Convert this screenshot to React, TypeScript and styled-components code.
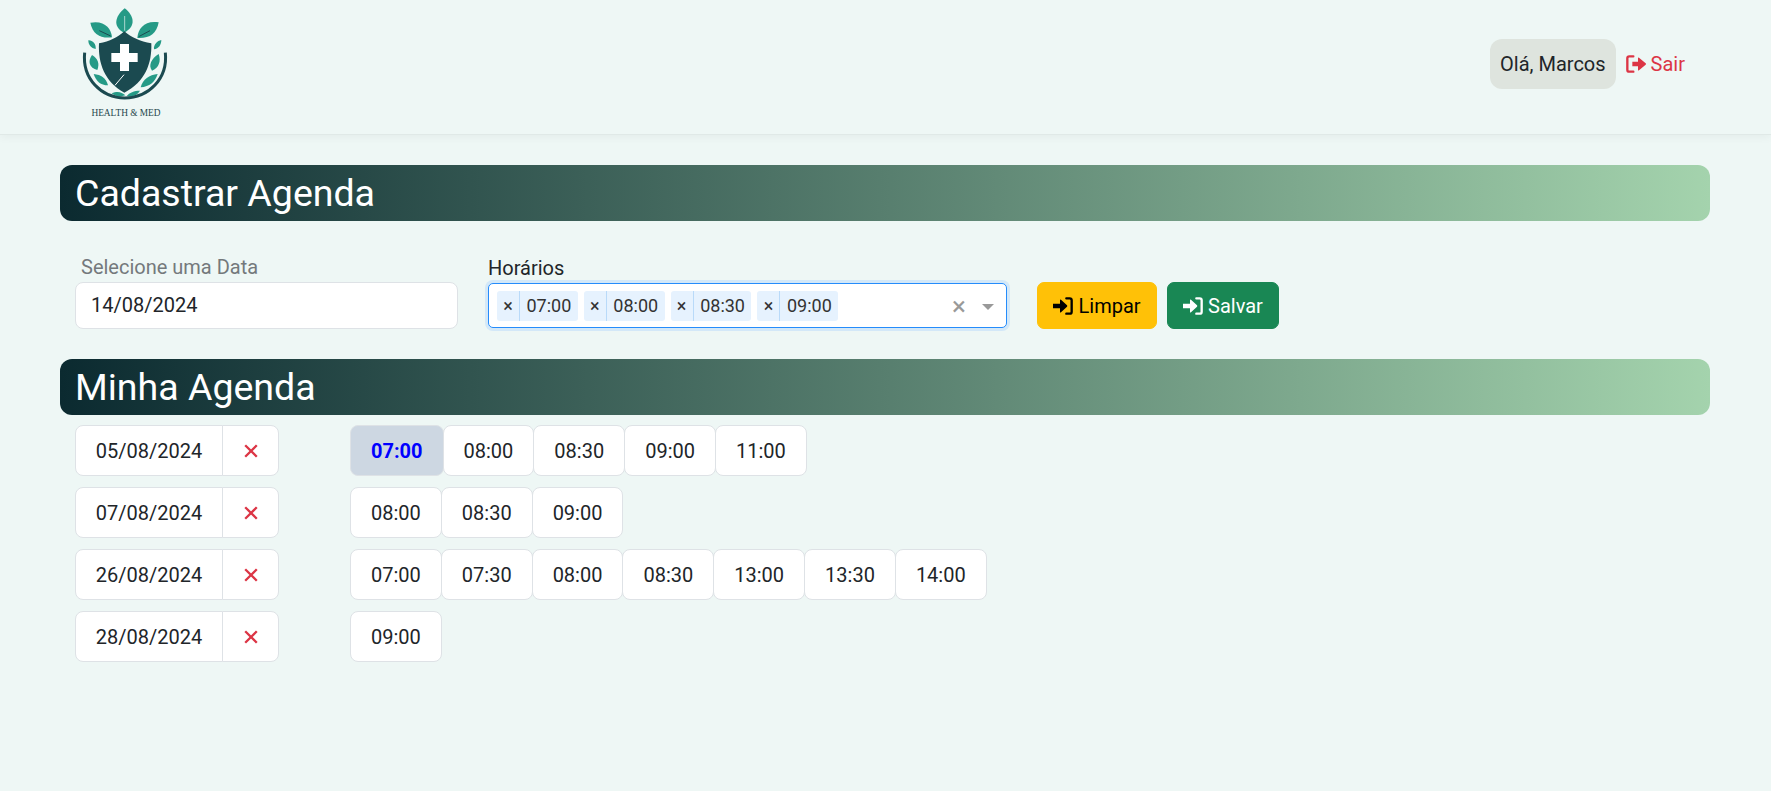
import React from "react";
import styled, { createGlobalStyle } from "styled-components";

const Global = createGlobalStyle`
  html, body { margin: 0; padding: 0; background: #eef7f5; }
  body {
    font-family: Roboto, "Liberation Sans", sans-serif;
    font-size: 20px;
    line-height: 30px;
    color: #212529;
    min-height: 791px;
    overflow: hidden;
  }
  * { box-sizing: border-box; }
`;

const Header = styled.header`
  height: 135px;
  padding: 0 86px 0 60px;
  display: flex;
  align-items: flex-start;
  justify-content: space-between;
  border-bottom: 1px solid #e0e9e7;
  box-shadow: 0 3px 8px rgba(0, 0, 0, 0.04);
`;

const Logo = styled.svg`
  width: 140px;
  height: 130px;
  display: block;
  flex: none;
`;

const UserArea = styled.div`
  display: flex;
  align-items: center;
  gap: 10px;
  margin-top: 39px;
`;

const Greeting = styled.span`
  display: block;
  height: 50px;
  padding: 10px;
  background: #dee4de;
  border-radius: 12px;
`;

const Logout = styled.a`
  display: flex;
  align-items: center;
  gap: 5px;
  color: #dc3545;
`;

const DoorIcon = styled.svg`
  width: 20px;
  height: 18px;
  flex: none;
  display: block;
`;

const Main = styled.main`
  padding: 30px 61px 0 60px;
`;

const Title = styled.h2`
  margin: 0;
  height: 56px;
  padding: 0 15px;
  font-size: 37.5px;
  line-height: 56px;
  font-weight: 400;
  color: #fff;
  border-radius: 12px;
  background: linear-gradient(90deg, #0b2a30 0%, #a4d3ad 100%);
`;

const FormRow = styled.div`
  display: flex;
  align-items: flex-end;
  padding: 0 15px 30px;
  height: 138px;
`;

const Field = styled.div<{ $width: number; $gap: number }>`
  width: ${(p) => p.$width}px;
  margin-right: ${(p) => p.$gap}px;
  flex: none;
`;

const FieldLabel = styled.label<{ $muted?: boolean; $indent?: number }>`
  display: block;
  height: 26px;
  line-height: 26px;
  margin-bottom: 2px;
  margin-left: ${(p) => p.$indent ?? 0}px;
  color: ${(p) => (p.$muted ? "#74797c" : "#212529")};
`;

const DateInput = styled.div`
  height: 47px;
  padding: 7px 15px;
  background: #fff;
  border: 1px solid #dee2e6;
  border-radius: 8px;
`;

const Select = styled.div`
  height: 45px;
  margin-bottom: 1px;
  display: flex;
  align-items: center;
  padding: 0 8px;
  gap: 6px;
  background: #fff;
  border: 1px solid #258cfb;
  border-radius: 5px;
  box-shadow: 0 0 0 3px #d3e8f8;
`;

const Chip = styled.span`
  display: flex;
  height: 30px;
  line-height: 30px;
  font-size: 18px;
  background: #e6f2fe;
  border-radius: 3px;
  color: #333;
`;

const ChipRemove = styled.span`
  width: 23px;
  text-align: center;
  border-right: 1px solid #b9daf9;
`;

const ChipText = styled.span`
  padding: 0 6.5px;
`;

const SelectSpacer = styled.span`
  flex: 1;
`;

const ClearMark = styled.span`
  color: #999;
  font-size: 26px;
  line-height: 30px;
  margin-right: 6px;
`;

const Caret = styled.span`
  width: 0;
  height: 0;
  margin: 2px 4px 0 4px;
  border-left: 6px solid transparent;
  border-right: 6px solid transparent;
  border-top: 6px solid #999;
`;

const ActionButton = styled.button<{ $bg: string; $fg: string }>`
  height: 47px;
  margin-right: 10px;
  padding: 0 15px;
  display: flex;
  align-items: center;
  gap: 5.5px;
  font: inherit;
  color: ${(p) => p.$fg};
  background: ${(p) => p.$bg};
  border: 1px solid ${(p) => p.$bg};
  border-radius: 7px;
`;

const AgendaList = styled.div`
  padding: 10px 15px 0;
`;

const AgendaRow = styled.div`
  display: flex;
  margin-bottom: 11px;
`;

const DateGroup = styled.div`
  display: flex;
  flex: none;
  width: 275px;
`;

const DateCell = styled.div`
  height: 51px;
  width: 148px;
  padding: 9.5px 0;
  text-align: center;
  background: #fff;
  border: 1px solid #dee2e6;
  border-radius: 8px 0 0 8px;
`;

const RemoveCell = styled.div`
  height: 51px;
  width: 57px;
  margin-left: -1px;
  display: flex;
  align-items: center;
  justify-content: center;
  background: #fff;
  border: 1px solid #dee2e6;
  border-radius: 0 8px 8px 0;
`;

const TimeGroup = styled.div`
  display: flex;
`;

const TimeCell = styled.div<{ $active?: boolean }>`
  height: 51px;
  padding: 9.5px 20px;
  background: ${(p) => (p.$active ? "#cdd7e2" : "#fff")};
  color: ${(p) => (p.$active ? "#0000ff" : "#212529")};
  font-weight: ${(p) => (p.$active ? 700 : 400)};
  border: 1px solid #dee2e6;
  border-radius: 8px;
  & + & { margin-left: -1px; }
`;

const SignOutIcon = () => (
  <DoorIcon viewBox="0 0 60 54" aria-hidden="true">
    <path d="M22 4H10a6 6 0 0 0-6 6V44a6 6 0 0 0 6 6H22" fill="none" stroke="currentColor" strokeWidth="7" strokeLinecap="round" />
    <path d="M19 20H36V9Q36 6 39 8L59 25Q61 27 59 29L39 46Q36 48 36 45V34H19Z" fill="currentColor" />
  </DoorIcon>
);

const SignInIcon = () => (
  <DoorIcon viewBox="0 0 60 54" aria-hidden="true">
    <path d="M40 4H50a6 6 0 0 1 6 6V44a6 6 0 0 1-6 6H40" fill="none" stroke="currentColor" strokeWidth="7" strokeLinecap="round" />
    <path d="M0 20H21V9Q21 6 24 8L42 25Q44 27 42 29L24 46Q21 48 21 45V34H0Z" fill="currentColor" />
  </DoorIcon>
);

const RemoveIcon = () => (
  <svg width="14" height="14" viewBox="0 0 14 14" aria-hidden="true">
    <path d="M1.2 1.2 12.8 12.8M12.8 1.2 1.2 12.8" stroke="#dc3545" strokeWidth="2.3" fill="none" />
  </svg>
);

const LogoMark = () => (
  <Logo viewBox="0 0 420 390" role="img" aria-label="Health & Med">
    <g fill="#259a86">
      <path d="M194 25C166 48 156 80 192 98C230 80 222 46 194 25Z" />
      <path d="M91 68C132 60 154 84 156 112C120 116 98 102 91 68Z" />
      <path d="M296 67C256 60 234 84 232 114C268 116 290 102 296 67Z" />
      <path d="M85 121C97 120 109 132 107 147C93 145 85 135 85 121Z" />
      <path d="M304 120C292 122 280 134 282 148C296 146 304 134 304 120Z" />
      <path d="M96 165C82 184 88 204 112 210C120 190 112 174 96 165Z" />
      <path d="M296 162C274 176 264 196 276 212C296 204 304 184 296 162Z" />
      <path d="M101 222C108 244 122 256 144 256C138 234 124 224 101 222Z" />
      <path d="M293 222C268 224 248 238 242 262C268 260 286 246 293 222Z" />
      <path d="M155 280C172 272 186 276 196 286C180 292 166 290 155 280Z" />
      <path d="M240 272C222 272 208 278 200 288C216 292 232 286 240 272Z" />
    </g>
    <g stroke="#1b4a50" strokeWidth="3" fill="none">
      <path d="M118 92 152 108" />
      <path d="M270 92 236 110" />
      <path d="M194 48V92" stroke="#edf6f4" strokeWidth="2" />
    </g>
    <path d="M117 130C150 124 172 112 193 94C214 112 240 124 274 130C276 190 256 246 193 278C134 246 114 190 117 130Z" fill="#1b4a50" />
    <path d="M180 132H207V159H233V186H207V213H180V186H154V159H180Z" fill="#fff" />
    <path d="M165 256 192 224" stroke="#fff" strokeWidth="3" fill="none" />
    <path d="M74 158C66 236 124 294 194 294C266 294 324 236 316 158" fill="none" stroke="#1b4a50" strokeWidth="9" />
    <text x="198" y="349" textAnchor="middle" fontFamily="Liberation Serif, serif" fontSize="28" fill="#27484d">
      HEALTH &amp; MED
    </text>
  </Logo>
);

const agenda = [
  { date: "05/08/2024", times: ["07:00", "08:00", "08:30", "09:00", "11:00"], active: "07:00" },
  { date: "07/08/2024", times: ["08:00", "08:30", "09:00"] },
  { date: "26/08/2024", times: ["07:00", "07:30", "08:00", "08:30", "13:00", "13:30", "14:00"] },
  { date: "28/08/2024", times: ["09:00"] },
];

export default function App() {
  return (
    <>
      <Global />
      <Header>
        <LogoMark />
        <UserArea>
          <Greeting>Olá, Marcos</Greeting>
          <Logout>
            <SignOutIcon />
            Sair
          </Logout>
        </UserArea>
      </Header>
      <Main>
        <Title>Cadastrar Agenda</Title>
        <FormRow>
          <Field $width={383} $gap={30}>
            <FieldLabel $muted $indent={6}>Selecione uma Data</FieldLabel>
            <DateInput>14/08/2024</DateInput>
          </Field>
          <Field $width={519} $gap={30}>
            <FieldLabel>Horários</FieldLabel>
            <Select>
              {["07:00", "08:00", "08:30", "09:00"].map((t) => (
                <Chip key={t}>
                  <ChipRemove>×</ChipRemove>
                  <ChipText>{t}</ChipText>
                </Chip>
              ))}
              <SelectSpacer />
              <ClearMark>×</ClearMark>
              <Caret />
            </Select>
          </Field>
          <ActionButton $bg="#ffc107" $fg="#000">
            <SignInIcon />
            Limpar
          </ActionButton>
          <ActionButton $bg="#198754" $fg="#fff">
            <SignInIcon />
            Salvar
          </ActionButton>
        </FormRow>
        <Title>Minha Agenda</Title>
        <AgendaList>
          {agenda.map((row) => (
            <AgendaRow key={row.date}>
              <DateGroup>
                <DateCell>{row.date}</DateCell>
                <RemoveCell>
                  <RemoveIcon />
                </RemoveCell>
              </DateGroup>
              <TimeGroup>
                {row.times.map((t) => (
                  <TimeCell key={t} $active={row.active === t}>{t}</TimeCell>
                ))}
              </TimeGroup>
            </AgendaRow>
          ))}
        </AgendaList>
      </Main>
    </>
  );
}
